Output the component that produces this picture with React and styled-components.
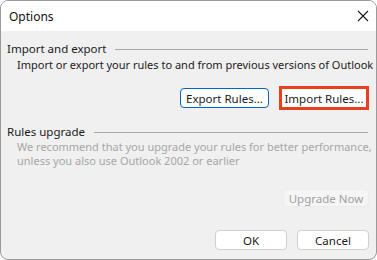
import styled, { createGlobalStyle } from 'styled-components';

const Global = createGlobalStyle`
  html, body { margin: 0; padding: 0; background: #ffffff; }
  * { box-sizing: border-box; }
`;

export default function App() {
  return (
    <>
      <Global />
      <Dialog>
        <TitleBar>
          <Title>Options</Title>
          <CloseButton aria-label="Close">
            <svg width="12" height="12" viewBox="0 0 12 12">
              <path d="M1 1 L11 11 M11 1 L1 11" stroke="#1a1a1a" strokeWidth="1.1" fill="none" />
            </svg>
          </CloseButton>
        </TitleBar>
        <Body>
          <SectionHeader $top={1}>
            <span>Import and export</span>
            <Rule />
          </SectionHeader>
          <Description>Import or export your rules to and from previous versions of Outlook</Description>
          <ButtonRow $top={13}>
            <Button $primary $w={89}>Export Rules...</Button>
            <Highlight>
              <Button $flat $w={84}>Import Rules...</Button>
            </Highlight>
          </ButtonRow>
          <SectionHeader $top={14}>
            <span>Rules upgrade</span>
            <Rule />
          </SectionHeader>
          <Description $muted>
            We recommend that you upgrade your rules for better performance,
            <br />
            unless you also use Outlook 2002 or earlier
          </Description>
          <ButtonRow $top={21}>
            <Button $disabled $w={86}>Upgrade Now</Button>
          </ButtonRow>
          <ButtonRow $top={23}>
            <Button $w={72}>OK</Button>
            <Button $w={72}>Cancel</Button>
          </ButtonRow>
        </Body>
      </Dialog>
    </>
  );
}

const Dialog = styled.div`
  width: 377px;
  height: 260px;
  display: flex;
  flex-direction: column;
  border: 1px solid #9a9a9a;
  border-radius: 8px;
  overflow: hidden;
  background: #f0f0f0;
  font-family: 'Noto Sans', 'Open Sans', sans-serif;
  font-size: 11px;
  color: #1b1b1b;
`;

const TitleBar = styled.div`
  height: 30px;
  display: flex;
  align-items: center;
  justify-content: space-between;
  padding: 0 3px 0 8px;
  background: #ffffff;
`;

const Title = styled.div`
  font-size: 12px;
  color: #111;
`;

const CloseButton = styled.div`
  width: 20px;
  height: 20px;
  display: flex;
  align-items: center;
  justify-content: center;
`;

const Body = styled.div`
  flex: 1;
  display: flex;
  flex-direction: column;
  padding: 9px 7px 0 6px;
`;

const SectionHeader = styled.div`
  display: flex;
  align-items: center;
  gap: 9px;
  line-height: 16px;
  font-size: 11.5px;
  margin-top: ${p => p.$top || 0}px;
`;

const Rule = styled.div`
  flex: 1;
  height: 1px;
  background: #a8a8a8;
  margin-right: 1px;
`;

const Description = styled.div`
  padding-left: 10px;
  line-height: ${p => (p.$muted ? '14px' : '16px')};
  color: ${p => (p.$muted ? '#a6a6a6' : '#1b1b1b')};
  white-space: nowrap;
`;

const ButtonRow = styled.div`
  display: flex;
  justify-content: flex-end;
  align-items: center;
  gap: 10px;
  margin-top: ${p => p.$top || 0}px;
`;

const Highlight = styled.div`
  border: 3px solid #e8401c;
  display: flex;
`;

const Button = styled.div`
  height: ${p => (p.$flat || p.$disabled ? '18px' : '20px')};
  width: ${p => (p.$w ? p.$w + 'px' : 'auto')};
  display: flex;
  align-items: center;
  justify-content: center;
  border-radius: ${p => (p.$flat ? '0' : '4px')};
  background: ${p => (p.$disabled ? '#f5f5f5' : '#ffffff')};
  border: 1px solid
    ${p => (p.$primary ? '#0067c0' : p.$disabled ? '#ececec' : p.$flat ? 'transparent' : '#d0d0d0')};
  color: ${p => (p.$disabled ? '#a0a0a0' : '#1b1b1b')};
  font-size: 11.5px;
  white-space: nowrap;
`;
